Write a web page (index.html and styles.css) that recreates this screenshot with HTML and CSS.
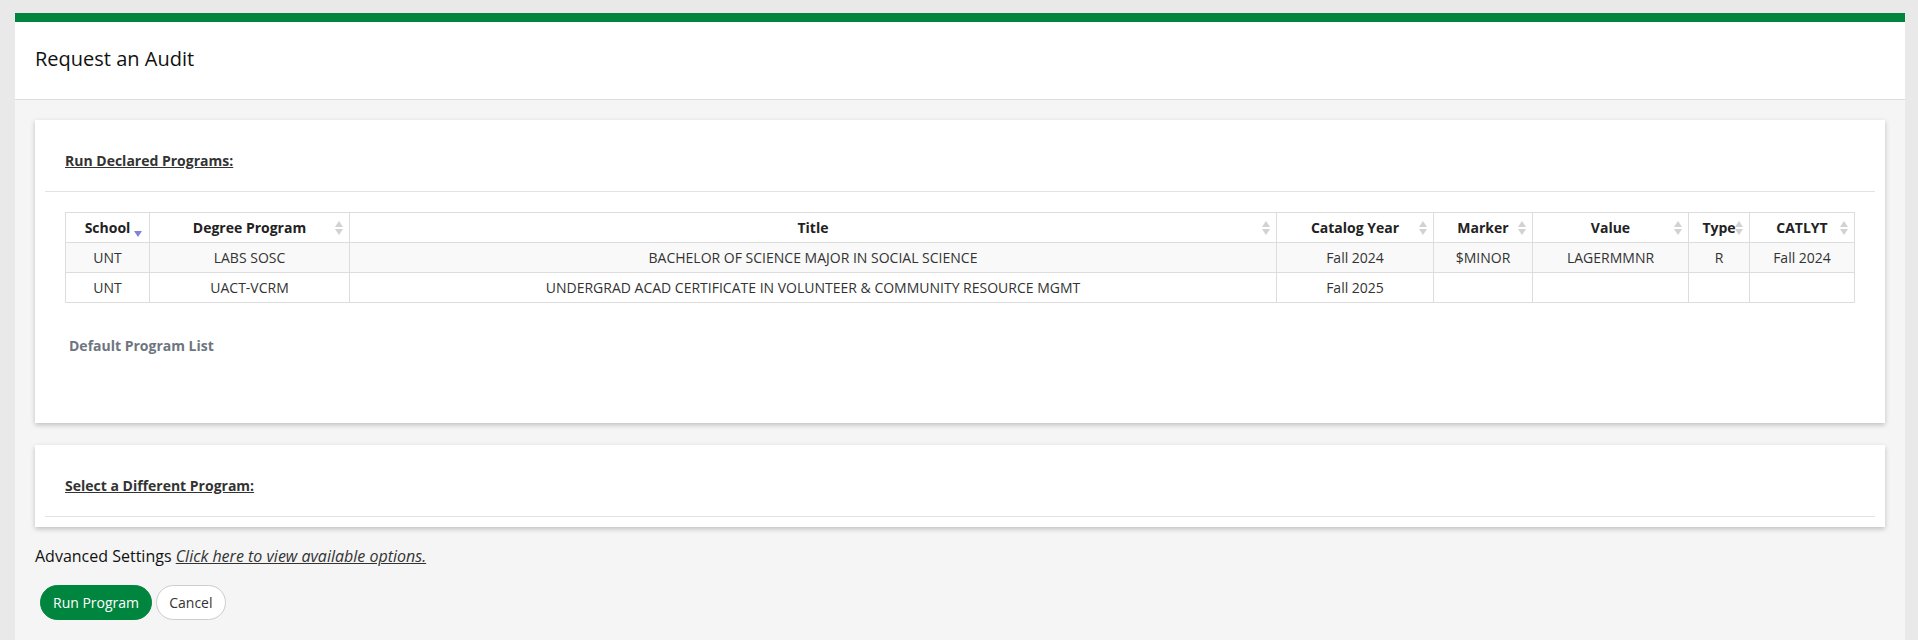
FILE: index.html
```html
<!DOCTYPE html>
<html lang="en">
  <head>
    <meta charset="UTF-8" />
    <meta name="viewport" content="width=device-width, initial-scale=1.0" />
    <title>Request an Audit</title>
    <link rel="stylesheet" href="styles.css">
  </head>
  <body>
    <div class="panel">
      <div class="panel-header">
        <h1>Request an Audit</h1>
      </div>

      <div class="panel-body">
        <div class="card">
          <div class="card-title">Run Declared Programs:</div>
          <div class="card-content">
            <table class="programs">
              <colgroup>
                <col class="c-school" />
                <col class="c-degree" />
                <col class="c-title" />
                <col class="c-year" />
                <col class="c-marker" />
                <col class="c-value" />
                <col class="c-type" />
                <col class="c-catlyt" />
              </colgroup>
              <thead>
                <tr>
                  <th>School<span class="sort desc"></span></th>
                  <th>Degree Program<span class="sort"></span></th>
                  <th>Title<span class="sort"></span></th>
                  <th>Catalog Year<span class="sort"></span></th>
                  <th>Marker<span class="sort"></span></th>
                  <th>Value<span class="sort"></span></th>
                  <th>Type<span class="sort"></span></th>
                  <th>CATLYT<span class="sort"></span></th>
                </tr>
              </thead>
              <tbody>
                <tr class="odd">
                  <td>UNT</td>
                  <td>LABS SOSC</td>
                  <td>BACHELOR OF SCIENCE MAJOR IN SOCIAL SCIENCE</td>
                  <td>Fall 2024</td>
                  <td>$MINOR</td>
                  <td>LAGERMMNR</td>
                  <td>R</td>
                  <td>Fall 2024</td>
                </tr>
                <tr>
                  <td>UNT</td>
                  <td>UACT-VCRM</td>
                  <td>UNDERGRAD ACAD CERTIFICATE IN VOLUNTEER &amp; COMMUNITY RESOURCE MGMT</td>
                  <td>Fall 2025</td>
                  <td></td>
                  <td></td>
                  <td></td>
                  <td></td>
                </tr>
              </tbody>
            </table>
            <div class="default-list">Default Program List</div>
          </div>
        </div>

        <div class="card card-second">
          <div class="card-title">Select a Different Program:</div>
          <div class="card-rule"></div>
        </div>

        <p class="advanced">
          Advanced Settings <a href="#">Click here to view available options.</a>
        </p>

        <div class="actions">
          <button class="btn btn-primary">Run Program</button>
          <button class="btn btn-default">Cancel</button>
        </div>
      </div>
    </div>
  </body>
</html>
```

FILE: styles.css
```css
body {
  font-family: "Open Sans", "Liberation Sans", Arial, sans-serif;
  background-color: #e9e9e9;
  color: #222;
  margin: 0;
  padding: 13px 13px 0 15px;
}

.panel {
  border-top: 9px solid #00853e;
  background-color: #f5f5f5;
  min-height: 640px;
}

.panel-header {
  background-color: #fff;
  border-bottom: 1px solid #ddd;
  padding: 23px 20px 26px;
}

.panel-header h1 {
  margin: 0;
  font-size: 20px;
  font-weight: normal;
  line-height: 28px;
  color: #111;
}

.panel-body {
  padding: 20px 20px;
}

.card {
  background-color: #fff;
  box-shadow: 0 2px 5px rgba(0, 0, 0, 0.22);
  padding: 0 10px;
}

.card-second {
  margin-top: 22px;
  padding-bottom: 10px;
}

.card-title {
  padding: 31px 20px 20px;
  font-size: 14px;
  font-weight: bold;
  line-height: 20px;
  color: #333;
  text-decoration: underline;
}

.card-content {
  border-top: 1px solid #e3e3e3;
  padding: 20px 20px 67px;
}

.card-rule {
  border-top: 1px solid #e3e3e3;
}

.programs {
  width: 100%;
  border-collapse: collapse;
  table-layout: fixed;
  font-size: 14px;
}

.c-school { width: 84px; }
.c-degree { width: 200px; }
.c-year { width: 157px; }
.c-marker { width: 99px; }
.c-value { width: 156px; }
.c-type { width: 61px; }
.c-catlyt { width: 105px; }

.programs th,
.programs td {
  border: 1px solid #ddd;
  height: 29px;
  padding: 0 10px;
  text-align: center;
  white-space: nowrap;
}

.programs th {
  position: relative;
  font-weight: bold;
  color: #222;
}

.programs td {
  color: #333;
}

.programs tr.odd td {
  background-color: #f9f9f9;
}

.sort {
  position: absolute;
  right: 6px;
  top: 8px;
  width: 0;
  height: 14px;
}

.sort::before,
.sort::after {
  content: "";
  position: absolute;
  left: -8px;
  border-left: 4px solid transparent;
  border-right: 4px solid transparent;
}

.sort::before {
  top: 0;
  border-bottom: 6px solid #d2d2d2;
}

.sort::after {
  top: 8px;
  border-top: 6px solid #d2d2d2;
}

.sort.desc::before {
  display: none;
}

.sort.desc::after {
  left: -9px;
  top: 10px;
  border-top-color: #7f84da;
}

.default-list {
  margin-top: 33px;
  padding-left: 4px;
  font-size: 14px;
  font-weight: bold;
  line-height: 20px;
  color: #6e7580;
}

.advanced {
  margin: 18px 0 18px;
  font-size: 16px;
  line-height: 22px;
  color: #111;
}

.advanced a {
  color: #333;
  font-style: italic;
}

.actions {
  padding-left: 5px;
}

.btn {
  font-family: inherit;
  font-size: 14px;
  height: 35px;
  padding: 0 12px;
  border-radius: 18px;
  cursor: pointer;
}

.btn-primary {
  background-color: #00853e;
  border: 1px solid #00853e;
  color: #fff;
}

.btn-default {
  background-color: #fff;
  border: 1px solid #ccc;
  color: #333;
}
```
